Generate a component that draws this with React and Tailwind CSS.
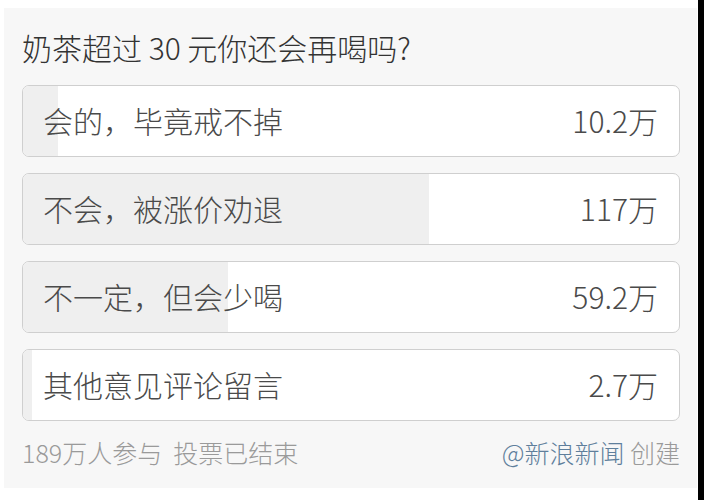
const options = [
  { label: "会的，毕竟戒不掉", count: "10.2万", value: 10.2 },
  { label: "不会，被涨价劝退", count: "117万", value: 117 },
  { label: "不一定，但会少喝", count: "59.2万", value: 59.2 },
  { label: "其他意见评论留言", count: "2.7万", value: 2.7 },
];

const TOTAL = 189;

function OptionRow({ label, count, value }) {
  const pct = (value / TOTAL) * 100;
  return (
    <div className="relative h-[72px] rounded-[7px] border border-[#cfcfcf] bg-white overflow-hidden">
      <div className="absolute left-0 top-0 bottom-0 bg-[#efefef]" style={{ width: `${pct}%` }} />
      <div className="relative h-full flex items-center justify-between pl-[20px] pr-[21px] pb-[2px] text-[30px] font-light text-[#4a4a4a]">
        <span>{label}</span>
        <span>{count}</span>
      </div>
    </div>
  );
}

export default function App() {
  return (
    <div
      className="w-[704px] h-[500px] bg-white flex"
      style={{ fontFamily: '"Noto Sans CJK SC", "Noto Sans", sans-serif' }}
    >
      <div className="ml-[4px] mt-[8px] w-[693px] h-[480px] bg-[#f7f7f7] px-[18px] pt-[16px]">
        <div className="h-[46px] flex items-center text-[30px] font-light text-[#333] leading-none">
          奶茶超过 30 元你还会再喝吗?
        </div>
        <div className="mt-[15px] flex flex-col gap-[16px] w-[658px]">
          {options.map((o) => (
            <OptionRow key={o.label} {...o} />
          ))}
        </div>
        <div className="mt-[19px] flex items-center justify-between w-[658px] text-[25px] font-light leading-none text-[#9a9a9a]">
          <span>189万人参与&nbsp;&nbsp;投票已结束</span>
          <span>
            <span className="text-[#5f7f9c]">@新浪新闻</span> 创建
          </span>
        </div>
      </div>
      <div className="ml-[1px] w-[6px] h-full bg-black" />
    </div>
  );
}
